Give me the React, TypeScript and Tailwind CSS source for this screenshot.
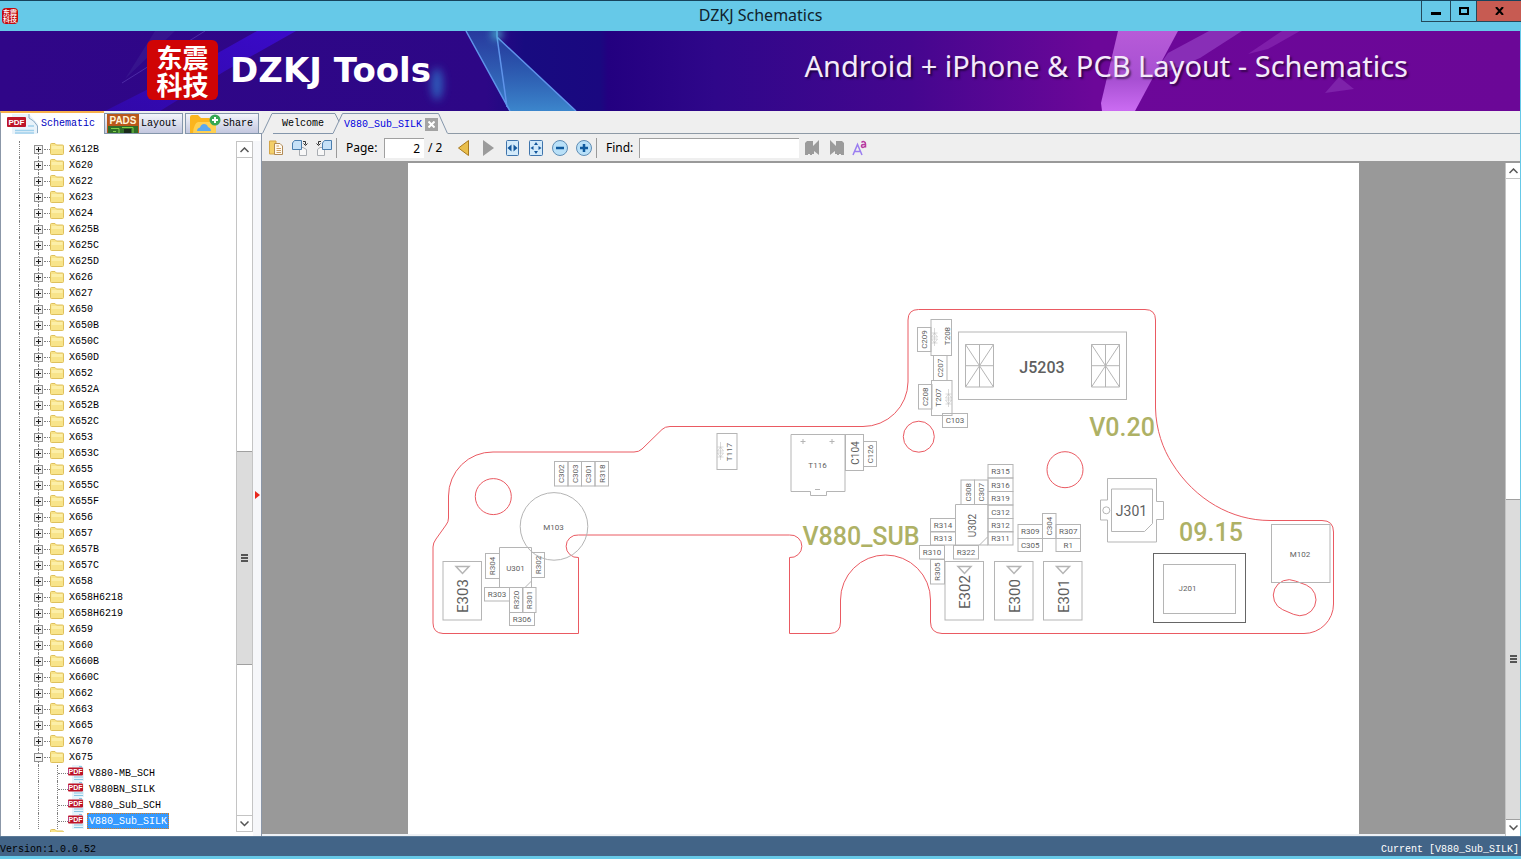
import { useState } from "react";

const folders = [
  "X612B", "X620", "X622", "X623", "X624", "X625B", "X625C", "X625D", "X626", "X627",
  "X650", "X650B", "X650C", "X650D", "X652", "X652A", "X652B", "X652C", "X653", "X653C",
  "X655", "X655C", "X655F", "X656", "X657", "X657B", "X657C", "X658", "X658H6218", "X658H6219",
  "X659", "X660", "X660B", "X660C", "X662", "X663", "X665", "X670", "X675",
];

const files = ["V880-MB_SCH", "V880BN_SILK", "V880_Sub_SCH", "V880_Sub_SILK"];

// x, y, width, height, label, vertical
type Part = [number, number, number, number, string, boolean];

const parts: Part[] = [
  [554.5, 461.5, 13.5, 24.5, "C302", true],
  [568, 461.5, 13.5, 24.5, "C303", true],
  [581.5, 461.5, 13.5, 24.5, "C301", true],
  [595, 461.5, 13.5, 24.5, "R318", true],
  [863.5, 441.5, 13, 25, "C126", true],
  [961, 480, 13.5, 24.5, "C308", true],
  [974.5, 480, 13.5, 24.5, "C307", true],
  [988, 464.5, 25, 13.5, "R315", false],
  [988, 478, 25, 13.5, "R316", false],
  [988, 491.5, 25, 13.5, "R319", false],
  [988, 505, 25, 13.5, "C312", false],
  [988, 518.5, 25, 13.5, "R312", false],
  [988, 531.5, 25, 13.5, "R311", false],
  [930.5, 518.5, 25, 13.5, "R314", false],
  [930.5, 531.5, 25, 13.5, "R313", false],
  [919.5, 545.5, 25, 13.5, "R310", false],
  [953.5, 545.5, 25, 13.5, "R322", false],
  [930.5, 559.5, 14, 24.5, "R305", true],
  [485.5, 553.5, 14, 25, "R304", true],
  [531.5, 552.5, 13, 25, "R302", true],
  [484.5, 587.5, 25, 13.5, "R303", false],
  [509.5, 587.5, 13.5, 25, "R320", true],
  [522.5, 587.5, 13.5, 25, "R301", true],
  [509.5, 612.5, 25, 13, "R306", false],
  [917.5, 327.5, 13.5, 24, "C209", true],
  [933.5, 355.5, 13.5, 25, "C207", true],
  [918.5, 384.5, 13.5, 24.5, "C208", true],
  [942.5, 413.5, 25, 14, "C103", false],
  [1018, 524.5, 24.5, 14, "R309", false],
  [1018, 538.5, 24.5, 13, "C305", false],
  [1042.5, 513.5, 13.5, 25, "C304", true],
  [1056, 524.5, 24.5, 14, "R307", false],
  [1056, 538.5, 24.5, 13, "R1", false],
];

const antennas: [number, number, string][] = [
  [443, 596, "E303"],
  [945, 592, "E302"],
  [994.5, 596, "E300"],
  [1043.5, 596, "E301"],
];

type LabelProps = { x: number; y: number; size?: number; vertical?: boolean; bold?: boolean; children: string };

const Label = ({ x, y, size = 8, vertical, bold, children }: LabelProps) => (
  <text
    x={x}
    y={y}
    dy={size * 0.36}
    fontSize={size}
    fontWeight={bold ? 500 : 400}
    textAnchor="middle"
    transform={vertical ? `rotate(-90 ${x} ${y})` : undefined}
  >
    {children}
  </text>
);

const Diode = ({ x, y }: { x: number; y: number }) => (
  <path d={`M${x} ${y - 9}v18M${x - 3} ${y - 4}h6M${x - 3} ${y}h6l-3 -4zM${x - 3} ${y + 2}h6l-3 4zM${x - 3} ${y + 6}h6`} />
);

const Board = () => (
  <svg viewBox="408 163 951 671" className="w-full" role="img" aria-label="V880_Sub_SILK">
    <g fill="none" stroke="#ea5a62" strokeWidth="1">
      <path d="M433 623V547Q433 543 436 539L446 525Q448.500 522 448.500 518V496A44 44 0 0 1 493 452H634Q639 452 642 449L662 429.500Q665 426.500 670 426.500H863A45 45 0 0 0 908 382V320Q908 309.500 918.500 309.500H1145Q1155.500 309.500 1155.500 320V408C1156 430 1163 449 1172 463C1195 500 1232 520.500 1270 520.500H1322Q1333.500 520.500 1333.500 532V604A29.500 29.500 0 0 1 1304 633.500H942Q930.500 633 930.500 622V600A45 45 0 0 0 840.500 600V622Q840.500 633 830 633.500H789.500V557.500A11.300 11.300 0 1 0 789.500 535H578.500A11.300 11.300 0 1 0 578.500 557.500V633.500H443Q433 633 433 623Z" />
      <circle cx="493.300" cy="496.600" r="18" />
      <circle cx="918.800" cy="436.700" r="15.500" />
      <circle cx="1065" cy="469.700" r="18" />
      <path d="M1295.300 581L1306.300 585A15.500 15.500 0 0 1 1293.700 614.400L1282.700 609.700A15.500 15.500 0 0 1 1295.300 581Z" />
    </g>
    <g fill="none" stroke="#b5b5b5" strokeWidth="1">
      {parts.map(([x, y, w, h, name]) => (
        <rect key={name} x={x} y={y} width={w} height={h} />
      ))}
      {antennas.map(([x, , name]) => (
        <g key={name}>
          <rect x={x} y="561.500" width="38.500" height="58.500" />
          <path d={`M${x + 13} 566.500h13l-6.500 7z`} strokeWidth="1.500" />
        </g>
      ))}
      <circle cx="554" cy="526.400" r="33.800" />
      <path d="M499.500 547.500h32v40h-32zM525 587.500l6.500 -6.500" />
      <path d="M955.500 504.500h32.500v40.500h-32.500zM979.500 545l8 -8" />
      <rect x="717" y="433.500" width="20" height="36" />
      <rect x="931" y="319.500" width="20.500" height="36" />
      <rect x="931.500" y="380.500" width="20.500" height="35" />
      <path d="M791 434.500h54v57h-18.500v4h-16v-4H791zM800.500 441.500h5M803 439v5M829.500 441.500h5M832 439v5M815 489.500h5" />
      <rect x="845.500" y="434.500" width="18" height="36" />
      <rect x="958.500" y="332" width="168" height="67.500" />
      <path d="M965.500 344.500h28v42.500h-28zl28 42.500M993.500 344.500l-28 42.500M979.500 344.500v42.500M965.500 365.700h28" />
      <path d="M1091.500 344.500h28v42.500h-28zl28 42.500M1119.500 344.500l-28 42.500M1105.500 344.500v42.500M1091.500 365.700h28" />
      <path d="M1107.500 478.500h49v23h7v18h-7v22.500h-49v-22h-7v-20h7z" />
      <path d="M1111.500 489h41v34.500l-8 8h-33z" />
      <circle cx="1106.300" cy="510.300" r="3.500" />
      <rect x="1163.500" y="564.500" width="72" height="49" />
      <rect x="1271.500" y="524.500" width="58.500" height="58" />
      <rect x="1153.500" y="553.500" width="92" height="69" stroke="#666666" />
      <g strokeWidth="0.500">
        <Diode x={720.500} y={451} />
        <Diode x={934.500} y={337} />
        <Diode x={948.500} y={398} />
      </g>
    </g>
    <g fill="#5f5f5f" className="font-['Roboto',sans-serif]">
      {parts.map(([x, y, w, h, name, vertical]) => (
        <Label key={name} x={x + w / 2} y={y + h / 2} vertical={vertical}>
          {name}
        </Label>
      ))}
      {antennas.map(([x, y, name]) => (
        <Label key={name} x={x + 20} y={y} size={15} vertical>
          {name}
        </Label>
      ))}
      <Label x={553.500} y={527}>M103</Label>
      <Label x={515.500} y={568}>U301</Label>
      <Label x={972.500} y={525.500} size={10} vertical>U302</Label>
      <Label x={729} y={452} vertical>T117</Label>
      <Label x={947.500} y={336} vertical>T208</Label>
      <Label x={938.500} y={397.500} vertical>T207</Label>
      <Label x={817.500} y={465}>T116</Label>
      <Label x={855} y={453} size={10} vertical>C104</Label>
      <Label x={1042} y={367} size={16} bold>J5203</Label>
      <Label x={1131.500} y={511} size={14}>J301</Label>
      <Label x={1187.500} y={588.500}>J201</Label>
      <Label x={1300} y={554}>M102</Label>
    </g>
    <g fill="#aeb165" className="font-['Roboto',sans-serif]">
      <Label x={861} y={536} size={25} bold>V880_SUB</Label>
      <Label x={1122} y={427} size={25} bold>V0.20</Label>
      <Label x={1211} y={532} size={25} bold>09.15</Label>
    </g>
  </svg>
);

const Folder = () => (
  <svg width="14" height="12" viewBox="0 0 14 12" className="shrink-0" aria-hidden="true">
    <path d="M.5 1.500Q.5 .5 1.500 .5H5L6.500 2H12.500Q13.500 2 13.500 3V10.500Q13.500 11.500 12.500 11.500H1.500Q.5 11.500 .5 10.500Z" fill="#f8e48a" stroke="#dfc05c" />
    <path d="M1.500 3H12.500V6H1.500Z" fill="#fcefa8" />
  </svg>
);

const PdfSmall = () => (
  <svg width="16" height="16" viewBox="0 0 16 16" className="shrink-0" aria-hidden="true">
    <path d="M4 0H13L16 3V16H4Z" fill="#e6f4fb" />
    <path d="M6 12H15M6 14.500H15M11 1.500H14" stroke="#8ac6e2" />
    <rect y="2.500" width="15" height="8" rx="1" fill="#bd1428" />
    <text x="7.500" y="9" textAnchor="middle" fontSize="7" fontWeight="700" fill="#ffffff" className="font-['Liberation_Sans',sans-serif]">PDF</text>
  </svg>
);

const PdfTabIcon = () => (
  <svg width="32" height="20" viewBox="0 0 32 20" aria-hidden="true">
    <path d="M5 0H22L31 10V20H5Z" fill="#e9f3fa" />
    <path d="M22 0V4Q27 6 30.500 12V19" fill="none" stroke="#8ba9c4" />
    <path d="M8 16.500H27M8 19H27M21 12H27" stroke="#9fd0ec" strokeWidth="1.500" />
    <rect y="3" width="19" height="10" rx="1" fill="#bd1428" />
    <text x="9.500" y="11" textAnchor="middle" fontSize="8" fontWeight="700" fill="#ffffff" className="font-['Liberation_Sans',sans-serif]">PDF</text>
  </svg>
);

const PadsIcon = () => (
  <svg width="32" height="19" viewBox="0 0 32 19" aria-hidden="true">
    <rect width="32" height="19" fill="#b9571b" />
    <rect x="1" y="12" width="30" height="7" fill="#2f6d27" />
    <path d="M4 14.500H12V19M15 13.500H26V19M6 17.500H9" stroke="#7fd04b" fill="none" />
    <rect x="17" y="15" width="7" height="4" fill="#1b2a1b" />
    <text x="16" y="10" textAnchor="middle" fontSize="10" fontWeight="700" fill="#fff4d8" className="font-['Liberation_Sans',sans-serif]">PADS</text>
  </svg>
);

const ShareIcon = () => (
  <svg width="32" height="19" viewBox="0 0 32 19" aria-hidden="true">
    <path d="M1 3Q1 1 3 1H9L12 4H20Q22 4 22 6V19H1Z" fill="#fbb51e" />
    <path d="M4 19Q5 9 9 8H27V19Z" fill="#ffd050" />
    <path d="M8 17Q8 14 11 13.500Q12 10 15 10Q18 10 19 13Q22 14 22 17Z" fill="#5ba8ef" />
    <circle cx="26" cy="6" r="5.500" fill="#35a853" />
    <path d="M23 6H29M26 3V9" stroke="#ffffff" strokeWidth="2" />
  </svg>
);

const Logo = ({ small }: { small?: boolean }) =>
  small ? (
    <div className="flex size-4 flex-col items-center justify-center rounded-sm bg-[#c40a0e] font-['Noto_Sans_CJK_SC',sans-serif] text-[7px] leading-[7px] font-medium text-white">
      <span>东震</span>
      <span>科技</span>
    </div>
  ) : (
    <div className="flex h-[60px] w-[71px] flex-col items-center justify-center rounded-md bg-[#d00405] font-['Noto_Sans_CJK_SC',sans-serif] text-[26px] leading-[27px] font-bold text-white">
      <span>东震</span>
      <span>科技</span>
    </div>
  );

const BannerArt = () => (
  <svg viewBox="0 0 1520 80" preserveAspectRatio="none" className="absolute inset-0 h-full w-full" aria-hidden="true">
    <defs>
      <linearGradient id="base">
        <stop offset="0" stopColor="#300688" />
        <stop offset="0.320" stopColor="#2d0786" />
        <stop offset="0.345" stopColor="#180b80" />
        <stop offset="0.395" stopColor="#1a0880" />
        <stop offset="0.400" stopColor="#230080" />
        <stop offset="0.470" stopColor="#2f078a" />
        <stop offset="0.600" stopColor="#45068f" />
        <stop offset="0.720" stopColor="#6c0799" />
        <stop offset="1" stopColor="#6b0797" />
      </linearGradient>
      <linearGradient id="shard" x1="0" y1="0" x2="0" y2="1">
        <stop offset="0" stopColor="#2550a8" stopOpacity="0.700" />
        <stop offset="1" stopColor="#3c86cc" />
      </linearGradient>
      <linearGradient id="pink" x1="0" y1="0" x2="0" y2="1">
        <stop offset="0" stopColor="#b75bd8" />
        <stop offset="0.600" stopColor="#a74fd2" />
        <stop offset="1" stopColor="#cb6cf2" />
      </linearGradient>
      <linearGradient id="ray" x1="1" y1="0" x2="0" y2="1">
        <stop offset="0" stopColor="#3c0bd0" />
        <stop offset="1" stopColor="#340ad0" stopOpacity="0.500" />
      </linearGradient>
      <filter id="glow" x="-1" y="-1" width="3" height="3">
        <feGaussianBlur stdDeviation="4" />
      </filter>
    </defs>
    <rect width="1520" height="80" fill="url(#base)" />
    <path d="M155 0H175L125 48Z" fill="#4a3aa0" opacity="0.250" />
    <path d="M257 0H296L225 40L160 80H105L200 32Z" fill="url(#ray)" opacity="0.900" />
    <path d="M205 0L122 52" stroke="#6a4fc4" opacity="0.500" />
    <ellipse cx="437" cy="53" rx="6" ry="16" fill="#2f7fd0" filter="url(#glow)" opacity="0.700" />
    <path d="M466 0H497L507 76L510 80Z" fill="url(#shard)" />
    <path d="M497 6L576 80H510L506 75Z" fill="url(#shard)" />
    <path d="M466 0L510 80M497 0V6L507 76M497 6L576 80" stroke="#5f93ea" strokeWidth="1.500" fill="none" />
    <circle cx="497" cy="3" r="5" fill="#50c8d8" filter="url(#glow)" />
    <path d="M1118 0H1178L1135 80H1102L1101 72Z" fill="url(#pink)" />
    <path d="M1209 0H1242L1200 27L1150 48L1168 22Z" fill="#9038be" opacity="0.800" />
    <path d="M1282 0H1300L1268 18L1248 23Z" fill="#8828b2" opacity="0.700" />
    <path d="M1339 46L1354 58L1325 62Z" fill="#862eb2" opacity="0.700" />
  </svg>
);

const Chevron = ({ down }: { down?: boolean }) => (
  <svg width="9" height="6" viewBox="0 0 9 6" fill="none" stroke="#555555" strokeWidth="1.500" aria-hidden="true">
    <path d={down ? "M.5 .5L4.500 4.500L8.500 .5" : "M.5 5L4.500 1L8.500 5"} />
  </svg>
);

const Grip = () => (
  <svg width="7" height="8" viewBox="0 0 7 8" stroke="#555555" strokeWidth="2" aria-hidden="true">
    <path d="M0 1H7M0 4H7M0 7H7" />
  </svg>
);

const dots = "border-dotted border-[#808080]";

const FolderRow = ({ name, open, first, onToggle }: { name: string; open: boolean; first: boolean; onToggle: () => void }) => (
  <div className="flex h-4 items-center">
    <span className={`ml-[18px] h-full w-px border-l ${dots}`} />
    <span className="ml-[14px] flex h-4 w-[9px] flex-col items-center">
      <span className={`h-[4px] w-px ${first ? "" : `border-l ${dots}`}`} />
      <button
        onClick={onToggle}
        aria-label={`Toggle ${name}`}
        className="flex size-[9px] items-center justify-center border border-[#919191] bg-[#f4f4f4]"
      >
        <svg width="5" height="5" viewBox="0 0 5 5" stroke="#222222" aria-hidden="true">
          <path d={open ? "M0 2.500H5" : "M0 2.500H5M2.500 0V5"} />
        </svg>
      </button>
      <span className={`h-[3px] w-px border-l ${dots}`} />
    </span>
    <span className={`ml-px h-px w-[6px] border-t ${dots}`} />
    <Folder />
    <span className="ml-[5px]">{name}</span>
  </div>
);

const FileRow = ({ name, selected, onSelect }: { name: string; selected: boolean; onSelect: () => void }) => (
  <div className="flex h-4 items-center">
    <span className={`ml-[18px] h-full w-px border-l ${dots}`} />
    <span className={`ml-[18px] h-full w-px border-l ${dots}`} />
    <span className={`ml-[18px] h-full w-px border-l ${dots}`} />
    <span className={`h-px w-[10px] border-t ${dots}`} />
    <PdfSmall />
    <button
      onClick={onSelect}
      className={
        selected
          ? "ml-[3px] h-4 border border-dotted border-[#d87d20] bg-[#3399ff] px-px leading-4 text-white"
          : "ml-[3px] h-4 border border-transparent px-px leading-4"
      }
    >
      {name}
    </button>
  </div>
);

const Sidebar = ({ selected, onSelect }: { selected: string; onSelect: (name: string) => void }) => {
  const [open, setOpen] = useState(true);

  return (
    <aside className="flex w-[262px] shrink-0 flex-col bg-[#f0f0f0] font-['Liberation_Mono',monospace] text-[10px] text-black">
      <div className="flex h-[23px] shrink-0 items-end">
        <button className="flex h-[23px] w-[104px] items-center gap-[2px] border-t-2 border-l border-t-[#f7b04a] border-l-[#8b97a8] bg-white pl-[6px] text-[#0000c0]">
          <PdfTabIcon />
          Schematic
        </button>
        <button className="flex h-[21px] w-[79px] items-center gap-[2px] border border-[#8496ab] bg-linear-to-b from-[#f4f6fb] to-[#c3c7df] pl-[2px]">
          <PadsIcon />
          Layout
        </button>
        <button className="ml-[2px] flex h-[21px] w-[74px] items-center gap-[2px] border border-[#8496ab] bg-linear-to-b from-[#f4f6fb] to-[#c3c7df] pl-[3px]">
          <ShareIcon />
          Share
        </button>
        <span className="h-px flex-1 bg-[#8496ab]" />
      </div>

      <div className="flex min-h-0 flex-1 border-r border-l border-[#8b97a8] bg-white pt-[7px]">
        <div className="min-w-0 flex-1 overflow-hidden">
          <ul>
            {folders.map((name, i) => (
              <li key={name}>
                <FolderRow name={name} open={i === folders.length - 1 && open} first={i === 0} onToggle={() => setOpen(!open)} />
              </li>
            ))}
            {open &&
              files.map((name) => (
                <li key={name}>
                  <FileRow name={name} selected={name === selected} onSelect={() => onSelect(name)} />
                </li>
              ))}
          </ul>
          <div className="flex h-[3px] overflow-hidden pl-[49px]">
            <Folder />
          </div>
        </div>
        <div className="mb-[4px] flex w-[17px] flex-col border-x border-[#c4c4c4] bg-white">
          <button aria-label="Scroll up" className="flex h-[17px] items-center justify-center border-y border-[#c4c4c4]">
            <Chevron />
          </button>
          <span className="grow-[294] basis-0" />
          <button aria-label="Scroll tree" className="flex grow-[213] basis-0 items-center justify-center border-y border-[#a0a0a0] bg-[#dcdcdc]">
            <Grip />
          </button>
          <span className="grow-[150] basis-0" />
          <button aria-label="Scroll down" className="flex h-[17px] items-center justify-center border-y border-[#c4c4c4]">
            <Chevron down />
          </button>
        </div>
        <div className="flex w-[8px] items-center justify-center bg-[#f6f7fa] pt-3">
          <svg width="5" height="8" viewBox="0 0 5 8" fill="#e8281e" aria-hidden="true">
            <path d="M0 0L5 4L0 8Z" />
          </svg>
        </div>
      </div>
    </aside>
  );
};

const DocTabs = () => (
  <div className="flex h-[23px] items-end bg-[#efefef] font-['Liberation_Mono',monospace] text-[10px]">
    <svg width="11" height="21" viewBox="0 0 11 21" fill="none" stroke="#8496ab" aria-hidden="true">
      <path d="M.5 20.500L10 .5H11" />
    </svg>
    <button className="h-[21px] w-[60px] border-y border-[#8496ab]">Welcome</button>
    <svg width="11" height="21" viewBox="0 0 11 21" fill="none" stroke="#8496ab" aria-hidden="true">
      <path d="M0 20.500L9.500 .5H11M0 .5H2L6 8.500" />
    </svg>
    <div className="flex h-[21px] items-center border-t border-[#8496ab]">
      <button className="h-full text-[#0000e0]">V880_Sub_SILK</button>
      <button aria-label="Close tab" className="ml-[3px] flex size-[13px] items-center justify-center bg-[#a3a3a3]">
        <svg width="7" height="7" viewBox="0 0 7 7" stroke="#ffffff" strokeWidth="2" aria-hidden="true">
          <path d="M.5 .5L6.500 6.500M6.500 .5L.5 6.500" />
        </svg>
      </button>
    </div>
    <svg width="10" height="21" viewBox="0 0 10 21" fill="none" stroke="#8496ab" aria-hidden="true">
      <path d="M0 .5H.5L9.500 20.500" />
    </svg>
    <span className="h-px flex-1 bg-[#8e9aa6]" />
  </div>
);

const toolButton = "flex h-[26px] w-6 shrink-0 items-center justify-center";

const Toolbar = () => {
  const [page, setPage] = useState("2");
  const [query, setQuery] = useState("");

  return (
    <div className="flex h-[29px] items-center border-b-2 border-[#999999] bg-[#efefef] pl-[2px] font-['Noto_Sans',sans-serif] text-[12px] text-black">
      <button aria-label="Open" className={toolButton}>
        <svg width="14" height="15" viewBox="0 0 14 15" aria-hidden="true">
          <path d="M.5 1H7V14H.5Z" fill="#f3cf69" stroke="#d4a548" />
          <path d="M5.500 3.500H11L13.500 6V14.500H5.500Z" fill="#fffaf0" stroke="#b18a55" />
          <path d="M7.500 6H10M7.500 8.500H12M7.500 10.500H12M7.500 12.500H12" stroke="#cc9f63" />
        </svg>
      </button>
      <button aria-label="Rotate right" className={toolButton}>
        <svg width="16" height="16" viewBox="0 0 16 16" aria-hidden="true">
          <path d="M7.500 7.500H11L14.500 9.500V15.500H7.500Z" fill="#f7f7f7" stroke="#a9adb2" />
          <path d="M2.500 .5H9.500V9.500H.5V3Z" fill="#c6e1f7" stroke="#4b7eae" />
          <path d="M11 1.500H13.500V4.500M11.500 3.500L13.500 5.500L15.500 3.500" fill="none" stroke="#333333" />
        </svg>
      </button>
      <button aria-label="Rotate left" className={toolButton}>
        <svg width="16" height="16" viewBox="0 0 16 16" aria-hidden="true">
          <path d="M1.500 9.500L4 7.500H8.500V15.500H1.500Z" fill="#f7f7f7" stroke="#a9adb2" />
          <path d="M8.500 .5H15.500V9.500H6.500V3Z" fill="#c6e1f7" stroke="#4b7eae" />
          <path d="M5 1.500H2.500V4.500M.5 3.500L2.500 5.500L4.500 3.500" fill="none" stroke="#333333" />
        </svg>
      </button>
      <span className="h-5 w-px bg-[#9a9a9a]" />
      <label htmlFor="page" className="ml-[9px] w-[38px]">Page:</label>
      <input
        id="page"
        value={page}
        onChange={(e) => setPage(e.target.value)}
        className="h-5 w-10 border-t border-l border-[#a0a0a0] bg-white pr-1 text-right outline-none"
      />
      <span className="w-7 pl-1">/ 2</span>
      <button aria-label="Previous page" className={toolButton}>
        <svg width="12" height="16" viewBox="0 0 12 16" aria-hidden="true">
          <path d="M10.500 .5V15.500L.5 8Z" fill="#e9be4b" stroke="#a87a1f" />
        </svg>
      </button>
      <button aria-label="Next page" className={toolButton}>
        <svg width="12" height="16" viewBox="0 0 12 16" fill="#9b9b9b" aria-hidden="true">
          <path d="M1 0L12 8L1 16Z" />
        </svg>
      </button>
      <button aria-label="Fit width" className={toolButton}>
        <svg width="13" height="16" viewBox="0 0 13 16" aria-hidden="true">
          <rect x=".5" y=".5" width="12" height="15" rx="1" fill="#d3eafa" stroke="#3f74ac" />
          <path d="M5.500 4.500V11.500L1.500 8ZM7.500 4.500V11.500L11.500 8Z" fill="#14579c" />
        </svg>
      </button>
      <button aria-label="Fit page" className={toolButton}>
        <svg width="14" height="16" viewBox="0 0 14 16" aria-hidden="true">
          <rect x=".5" y=".5" width="13" height="15" rx="1" fill="#d3eafa" stroke="#3f74ac" />
          <path d="M7 2L9 5H5ZM7 14L9 11H5ZM1.500 8L4.500 6V10ZM12.500 8L9.500 6V10Z" fill="#14579c" />
        </svg>
      </button>
      <button aria-label="Zoom out" className={toolButton}>
        <svg width="16" height="16" viewBox="0 0 16 16" aria-hidden="true">
          <circle cx="8" cy="8" r="7.500" fill="#b9e0f8" stroke="#5f8db5" />
          <path d="M4 8H12" stroke="#0f5a9e" strokeWidth="2.500" />
        </svg>
      </button>
      <button aria-label="Zoom in" className={toolButton}>
        <svg width="16" height="16" viewBox="0 0 16 16" aria-hidden="true">
          <circle cx="8" cy="8" r="7.500" fill="#b9e0f8" stroke="#5f8db5" />
          <path d="M4 8H12M8 4V12" stroke="#0f5a9e" strokeWidth="2.500" />
        </svg>
      </button>
      <span className="h-5 w-px bg-[#9a9a9a]" />
      <label htmlFor="find" className="ml-[9px] w-[33px]">Find:</label>
      <input
        id="find"
        value={query}
        onChange={(e) => setQuery(e.target.value)}
        className="mr-px h-5 w-[160px] border-t border-l border-[#a0a0a0] bg-white px-1 outline-none"
      />
      <button aria-label="Find previous" className={toolButton}>
        <svg width="15" height="16" viewBox="0 0 15 16" fill="#9b9b9b" aria-hidden="true">
          <path d="M0 3L2 1H8V6L14 0V15L9 11V14H7V15H5V14H3V15H0Z" />
        </svg>
      </button>
      <button aria-label="Find next" className={toolButton}>
        <svg width="15" height="16" viewBox="0 0 15 16" fill="#9b9b9b" aria-hidden="true">
          <path d="M15 3L13 1H7V6L1 0V15L6 11V14H8V15H10V14H12V15H15Z" />
        </svg>
      </button>
      <button aria-label="Match case" className={toolButton}>
        <svg width="16" height="16" viewBox="0 0 16 16" fill="none" aria-hidden="true">
          <path d="M1 15L5.500 4.500L10 15M2.500 11.500H8.500" stroke="#9a7df0" strokeWidth="1.500" />
          <path d="M9.500 2.500Q11 1 12.500 2Q13.500 2.500 13.500 4V7.500M13.500 4.500Q9 4 9.500 6.500Q11 8.500 13.500 6" stroke="#b83aa0" strokeWidth="1.500" />
        </svg>
      </button>
    </div>
  );
};

const Viewer = () => (
  <div className="flex min-h-0 flex-1">
    <div className="flex min-w-0 flex-1 justify-center overflow-hidden border-b-2 border-[#eef1f5] bg-[#999999]">
      <div className="w-[951px] bg-white">
        <Board />
      </div>
    </div>
    <div className="flex w-[15px] flex-col border-l border-[#c4c4c4] bg-white">
      <button aria-label="Page up" className="flex h-4 items-center justify-center border-b border-[#c4c4c4]">
        <Chevron />
      </button>
      <span className="grow basis-0" />
      <button aria-label="Scroll page" className="flex grow basis-0 items-center justify-center border-y border-[#a0a0a0] bg-[#dcdcdc]">
        <Grip />
      </button>
      <button aria-label="Page down" className="flex h-4 items-center justify-center">
        <Chevron down />
      </button>
    </div>
  </div>
);

const App = () => {
  const [selected, setSelected] = useState("V880_Sub_SILK");

  return (
    <div className="flex h-screen w-full flex-col overflow-hidden bg-[#66c9e8]">
      <header className="grid h-[31px] shrink-0 grid-cols-[1fr_auto_1fr] items-center border-t border-[#16435c] font-['Noto_Sans',sans-serif] text-[16px] leading-7 text-[#10222c]">
        <div className="pl-[2px]">
          <Logo small />
        </div>
        <h1 className="self-start">DZKJ Schematics</h1>
        <div className="flex h-[21px] justify-end self-start">
          <button aria-label="Minimize" className="flex w-[29px] items-center justify-center border-b border-l border-[#24485a]">
            <svg width="10" height="10" viewBox="0 0 10 10" aria-hidden="true">
              <path d="M0 6H10V9H0Z" />
            </svg>
          </button>
          <button aria-label="Maximize" className="flex w-[26px] items-center justify-center border-b border-l border-[#24485a]">
            <svg width="10" height="8" viewBox="0 0 10 8" fill="none" stroke="#000000" strokeWidth="2" aria-hidden="true">
              <path d="M1 1H9V7H1Z" />
            </svg>
          </button>
          <button aria-label="Close" className="flex w-[45px] items-center justify-center border-b border-l border-[#24485a] bg-[#c75b52]">
            <svg width="9" height="8" viewBox="0 0 9 8" stroke="#000000" strokeWidth="2" aria-hidden="true">
              <path d="M1 0L8 8M8 0L1 8" />
            </svg>
          </button>
        </div>
      </header>

      <div className="relative mr-px h-20 shrink-0">
        <BannerArt />
        <div className="relative flex h-full items-center justify-between pr-[112px] pb-[2px] pl-[147px] font-['Noto_Sans',sans-serif] text-white">
          <div className="flex items-center gap-3">
            <Logo />
            <span className="font-['DejaVu_Sans',sans-serif] text-[34px] leading-10 font-bold">DZKJ Tools</span>
          </div>
          <p className="pb-2 text-[29px] leading-9 whitespace-nowrap text-[#f4eafa] [text-shadow:2px_2px_2px_rgb(0_0_0/0.5)]">
            Android + iPhone &amp; PCB Layout - Schematics
          </p>
        </div>
      </div>

      <div className="mr-px flex min-h-0 flex-1">
        <Sidebar selected={selected} onSelect={setSelected} />
        <main className="flex min-w-0 flex-1 flex-col">
          <DocTabs />
          <Toolbar />
          <Viewer />
        </main>
      </div>

      <footer className="mb-[3px] flex h-5 shrink-0 items-end justify-between border-t border-[#5c7a97] bg-[#426487] pr-[2px] font-['Liberation_Mono',monospace] text-[10px] leading-3">
        <span className="text-black">Version:1.0.0.52</span>
        <span className="text-white">Current [{selected}]</span>
      </footer>
    </div>
  );
};

export default App;
